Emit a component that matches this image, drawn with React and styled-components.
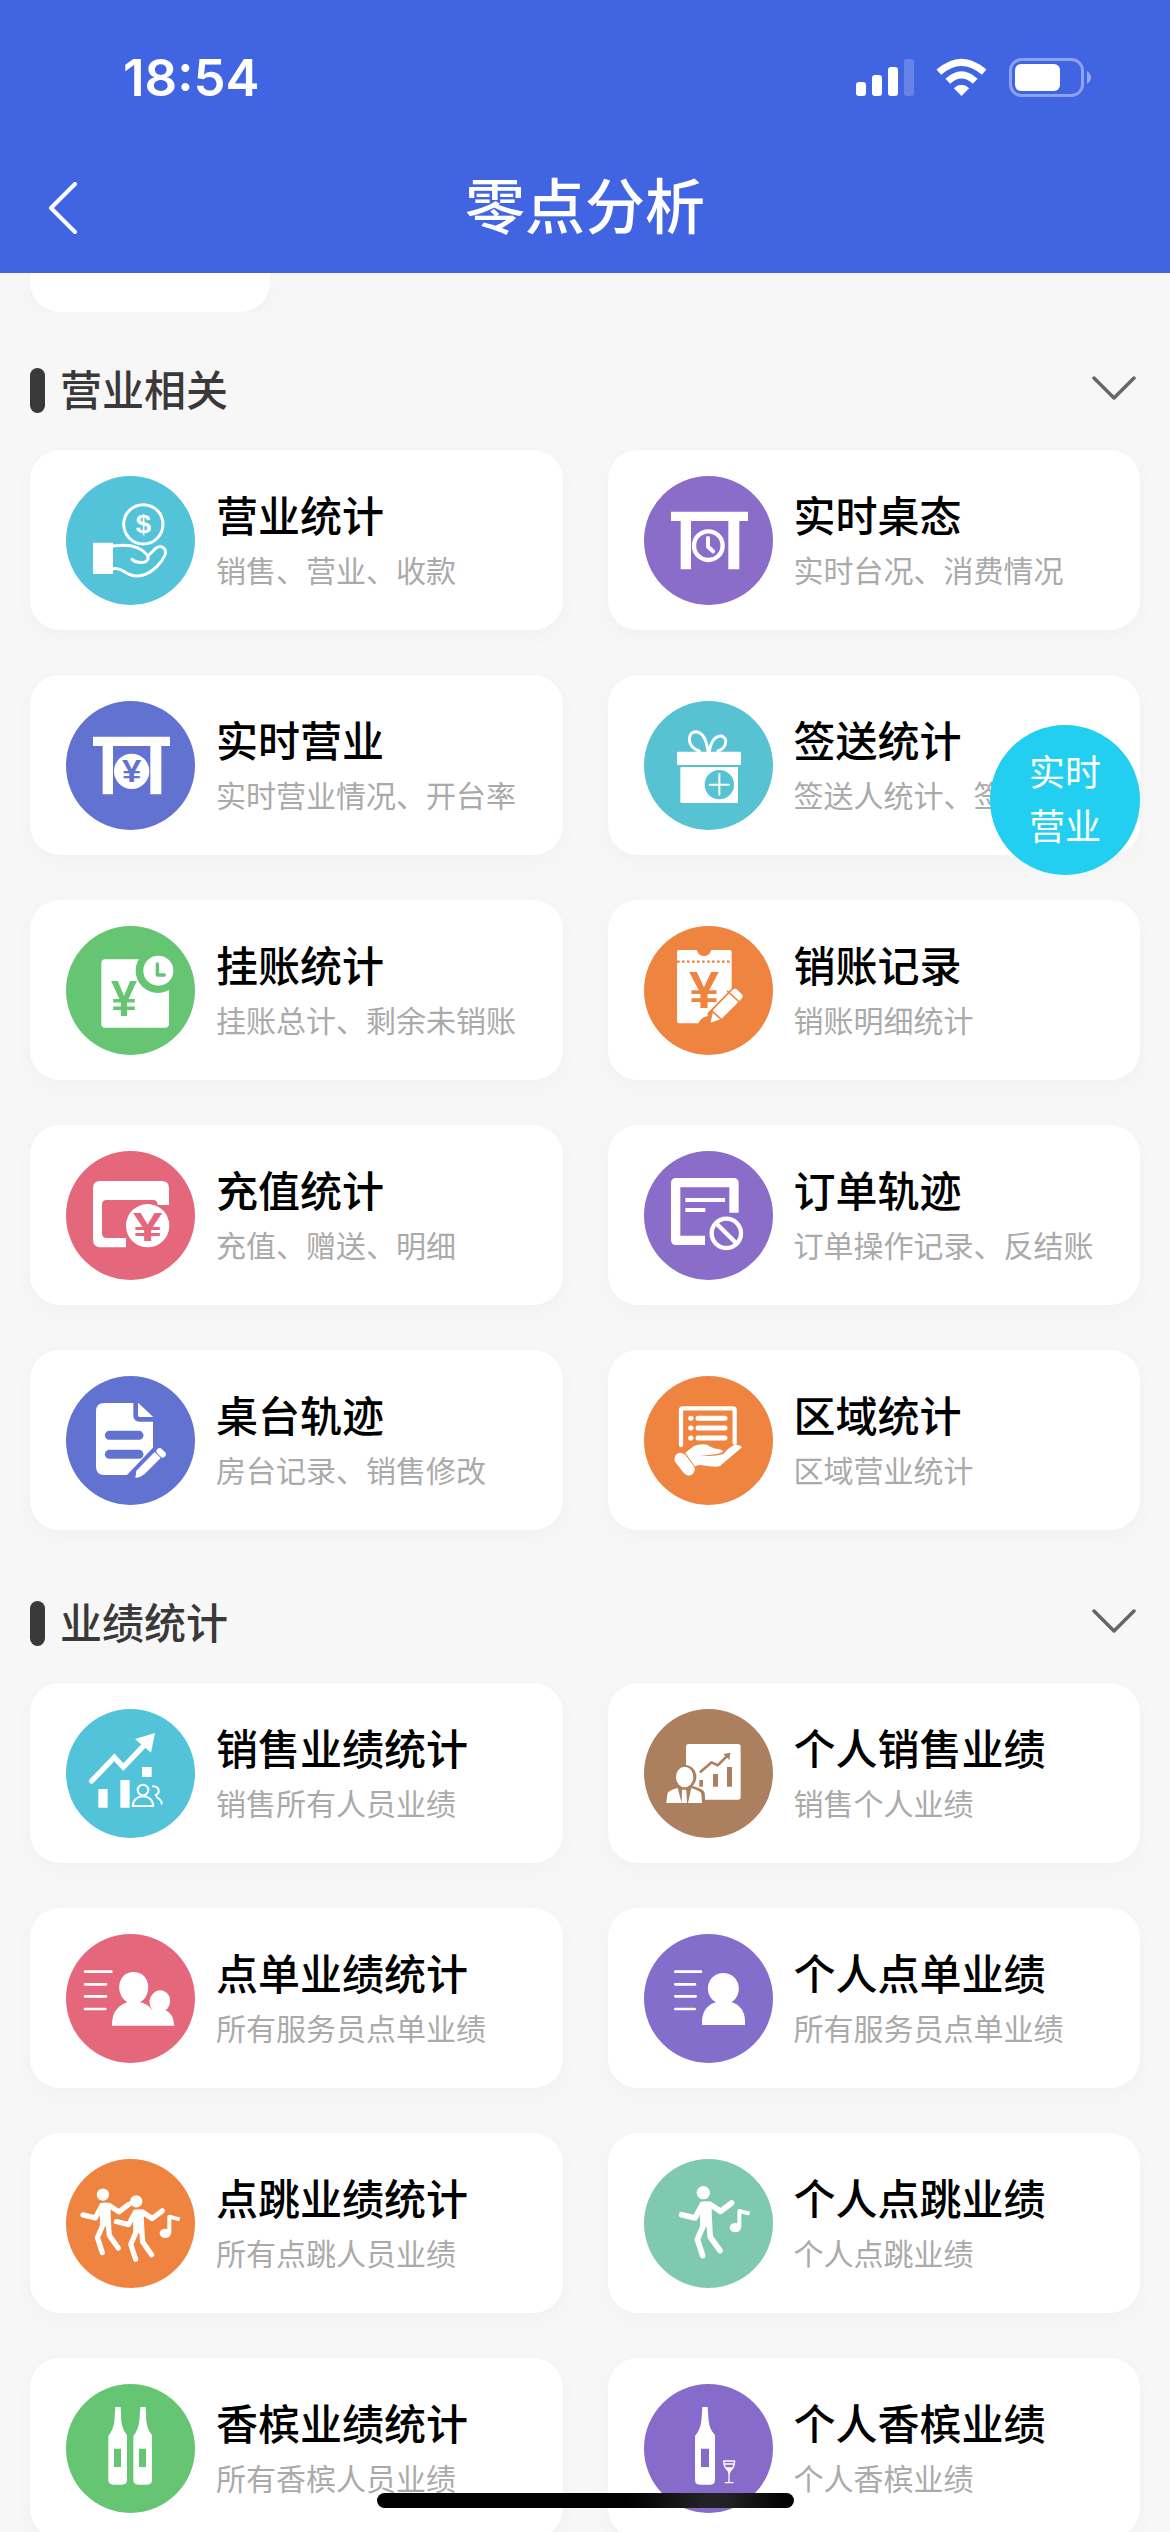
import React from 'react'
import styled, { createGlobalStyle } from 'styled-components'

const GlobalStyle = createGlobalStyle`
  * {
    box-sizing: border-box;
  }
  body {
    margin: 0;
    background-color: #f7f7f7;
    font-family: "Noto Sans CJK SC", sans-serif;
  }
`
const Page = styled.div`
  position: relative;
  display: flex;
  flex-direction: column;
  width: 1170px;
  height: 2532px;
  overflow: hidden;
  background-color: #f7f7f7;
`
const Header = styled.header`
  flex: none;
  height: 273px;
  background-color: #4164e3;
  color: white;
`
const StatusBar = styled.div`
  display: flex;
  align-items: center;
  justify-content: space-between;
  height: 156px;
  padding: 0 78px 0 123px;
`
const Time = styled.span`
  font-family: Inter, sans-serif;
  font-size: 51px;
  font-weight: 600;
  line-height: 60px;
`
const StatusIcons = styled.svg`
  display: block;
  width: 237px;
  height: 40px;
`
const TitleBar = styled.div`
  display: grid;
  grid-template-columns: 120px 1fr 120px;
  align-items: center;
  height: 102px;
`
const BackIcon = styled.svg`
  display: block;
  width: 30px;
  height: 52px;
  margin: 2px 0 0 48px;
`
const PageTitle = styled.h1`
  margin: 0 0 9px;
  text-align: center;
  font-size: 60px;
  font-weight: 500;
  line-height: 80px;
`
const Content = styled.main`
  flex: none;
  padding: 0 30px;
`
const Clip = styled.div`
  height: 39px;
  margin: 0 -30px;
  padding: 0 30px;
  overflow: hidden;
`
const PreviousCard = styled.div`
  width: 240px;
  height: 39px;
  border-radius: 0 0 30px 30px;
  background-color: white;
  box-shadow: 0 6px 18px rgba(40, 90, 80, 0.04);
`
const Section = styled.section`
  padding-top: ${props => props.$top}px;
`
const SectionHead = styled.div`
  display: flex;
  align-items: center;
  height: 45px;
  margin-bottom: 37px;
`
const Marker = styled.span`
  width: 15px;
  height: 45px;
  margin-right: 15px;
  border-radius: 8px;
  background-color: #3a3838;
`
const SectionTitle = styled.h2`
  flex: 1;
  margin: 0 0 6px;
  color: #3a3838;
  font-size: 42px;
  font-weight: 500;
  line-height: 45px;
`
const Chevron = styled.svg`
  width: 44px;
  height: 26px;
  margin: -5px 4px 0 0;
`
const Grid = styled.div`
  display: grid;
  grid-template-columns: 1fr 1fr;
  gap: 45px;
`
const Card = styled.div`
  display: flex;
  height: 180px;
  padding: 26px 0 0 36px;
  border-radius: 30px;
  background-color: white;
  box-shadow: 0 6px 18px rgba(40, 90, 80, 0.04);
`
const Badge = styled.svg`
  flex: none;
  display: block;
  width: 129px;
  height: 129px;
  margin-right: 21px;
  border-radius: 50%;
  background-color: ${props => props.$bg};
  color: ${props => props.$bg};
`
const CardText = styled.div`
  padding-top: 8px;
  white-space: nowrap;
`
const CardTitle = styled.div`
  color: #000;
  font-size: 42px;
  font-weight: 500;
  line-height: 60px;
`
const CardNote = styled.div`
  margin-top: 4px;
  color: #aaa;
  font-size: 30px;
  font-weight: 400;
  line-height: 42px;
`
const FloatButton = styled.div`
  position: absolute;
  top: 725px;
  right: 30px;
  display: flex;
  align-items: center;
  justify-content: center;
  width: 150px;
  height: 150px;
  padding-bottom: 6px;
  border-radius: 50%;
  background-color: #22cff0;
  color: white;
  text-align: center;
  font-size: 36px;
  font-weight: 400;
  line-height: 54px;
`
const HomeIndicator = styled.div`
  position: absolute;
  left: 377px;
  bottom: 24px;
  width: 417px;
  height: 15px;
  border-radius: 8px;
  background: linear-gradient(90deg, #000 0%, #000 60%, #222 78%, #222 84%, #050505 97%);
`

const line = (width, color = 'white') => ({
  fill: 'none',
  stroke: color,
  strokeWidth: width,
  strokeLinecap: 'round',
  strokeLinejoin: 'round',
})

const Sign = ({ x, y, size, width, fill = 'currentColor', weight = 700, children }) => (
  <text
    x={x}
    y={y}
    fill={fill}
    fontFamily="Liberation Sans, sans-serif"
    fontSize={size}
    fontWeight={weight}
    textLength={width}
    lengthAdjust="spacingAndGlyphs"
  >
    {children}
  </text>
)

const Dancer = ({ transform }) => (
  <g transform={transform}>
    <circle cx="178" cy="101" r="20" fill="white" />
    <path d="M168 130Q184 124 202 130L205 205L168 203Z" fill="white" />
    <path d="M113 167L153 177L174 138M198 136L230 157L263 132" {...line(17)} />
    <path d="M178 200L160 241L176 290M196 200L199 234L228 275" {...line(17)} />
  </g>
)

const Note = ({ transform }) => (
  <g transform={transform}>
    <ellipse cx="274" cy="206" rx="17" ry="14" fill="white" />
    <path d="M286 206V156L317 164" {...line(12)} strokeLinecap="butt" />
  </g>
)

const Table = () => (
  <path d="M81 107H312V135H286V280H253V135H141V280H110V135H81Z" fill="white" />
)

const icons = {
  income: (
    <>
      <circle cx="232" cy="145" r="59" {...line(9)} />
      <Sign x="209" y="172" size="78" width="46" fill="white">$</Sign>
      <path d="M81 200H141V294H81Z" fill="white" />
      <path
        d="M141 210C180 204 220 208 242 235C254 253 238 262 220 259Q206 258 198 250M246 240L268 218C284 203 304 217 297 237C286 262 262 286 238 295C212 306 188 296 170 284Q156 275 141 278"
        {...line(9)}
      />
    </>
  ),
  tableClock: (
    <>
      <Table />
      <circle cx="193" cy="209" r="43" {...line(13)} />
      <path d="M192 186V212L207 226" {...line(12)} />
    </>
  ),
  tableYen: (
    <>
      <Table />
      <circle cx="197" cy="211" r="53" fill="white" />
      <Sign x="168" y="244" size="94" width="58">¥</Sign>
    </>
  ),
  gift: (
    <>
      <path
        d="M192 152C188 118 176 94 156 92C134 92 130 122 146 138Q154 147 166 150M196 152C200 122 214 104 232 105C252 110 250 140 222 150"
        {...line(9)}
      />
      <rect x="99" y="152" width="192" height="40" rx="3" fill="white" />
      <rect x="109" y="198" width="173" height="108" rx="4" fill="white" />
      <circle cx="226" cy="251" r="44" fill="currentColor" />
      <path d="M197 251H255M226 219V281" {...line(6)} />
    </>
  ),
  bill: (
    <>
      <rect x="106" y="100" width="203" height="205" rx="12" fill="white" />
      <circle cx="276" cy="134" r="67" fill="currentColor" />
      <circle cx="277" cy="134" r="45" fill="white" />
      <path d="M274 114V147H295" {...line(10, 'currentColor')} />
      <Sign x="135" y="269" size="152" width="78">¥</Sign>
    </>
  ),
  ticket: (
    <>
      <path d="M105 72H158Q164 90 180 90Q196 90 202 72H257Q263 72 263 78V292H105Q99 292 99 286V78Q99 72 105 72Z" fill="white" />
      <path d="M99 107H263" stroke="currentColor" strokeWidth="7" strokeDasharray="8 7" />
      <Sign x="135" y="246" size="158" width="90">¥</Sign>
      <path d="M270 180L190 262L192 270Q170 272 160 298H270Z" fill="currentColor" />
      <path d="M263 194Q271 184 280 191L292 203Q300 211 292 219L233 278L200 290L208 251Z" fill="white" />
      <path d="M251 196L286 228M205 256L234 282" {...line(5, 'currentColor')} />
    </>
  ),
  wallet: (
    <>
      <path
        d="M103 90H287Q309 90 309 112V162H275Q274 147 262 147H122Q108 147 108 161V247Q108 261 122 261H180V289H103Q81 289 81 267V112Q81 90 103 90Z"
        fill="white"
      />
      <circle cx="245" cy="224" r="65" fill="white" />
      <Sign x="201" y="271" size="122" width="88">¥</Sign>
    </>
  ),
  orderVoid: (
    <>
      <path d="M183 268H95V95H270V185" {...line(28)} strokeLinecap="butt" />
      <path d="M124 147H243M124 177H184" {...line(12)} strokeLinecap="butt" />
      <circle cx="247" cy="247" r="44" {...line(13)} />
      <path d="M218 218L276 276" {...line(13)} />
    </>
  ),
  tableEdit: (
    <>
      <path d="M115 81H217L261 122V297H115Q90 297 90 272V106Q90 81 115 81Z" fill="white" />
      <path d="M209 79V118Q209 130 221 130H265" {...line(14, 'currentColor')} strokeLinecap="butt" />
      <path d="M130 178H219M130 235H219" {...line(27, 'currentColor')} />
      <path d="M268 208L180 300H270Z" fill="currentColor" />
      <path d="M211 284L266 228L284 246L236 294Q224 304 208 306Z" fill="white" />
      <path d="M281 226L290 235" {...line(19)} />
    </>
  ),
  areaHand: (
    <>
      <path d="M111 207V103Q111 97 117 97H266Q272 97 272 103V200" {...line(13)} />
      <path d="M140 127H141M140 156H141M140 186H141M162 127H243M162 156H243M162 186H243" {...line(15)} />
      <path
        d="M122 232L150 210Q170 202 192 207Q202 216 222 219Q240 222 236 227Q226 236 168 238Q206 244 238 234Q252 216 270 207Q286 203 294 214L228 270Q218 275 170 267Q162 266 150 273Z"
        fill="white"
      />
      <path d="M110 249L134 280" {...line(37)} />
      <path d="M121 228L157 280" {...line(3, 'currentColor')} />
    </>
  ),
  growth: (
    <>
      <path d="M77 216L145 145L172 174L242 101" {...line(16)} strokeLinejoin="miter" />
      <path d="M267 72L255 131L207 90Z" fill="white" />
      <path d="M97 240H125V296H97ZM163 213H191V296H163ZM228 174H257V204H228Z" fill="white" />
      <circle cx="231" cy="243" r="16" {...line(6)} />
      <path d="M200 291C202 252 260 252 262 291ZM261 232C284 234 281 254 269 258Q272 266 280 270Q287 276 287 284" {...line(6)} />
    </>
  ),
  presenter: (
    <>
      <rect x="126" y="105" width="164" height="167" rx="8" fill="white" />
      <path d="M170 188L203 160L221 169L248 142" {...line(8, 'currentColor')} />
      <path d="M259 131L256 153L238 135Z" fill="currentColor" />
      <path d="M166 213H177V233H166ZM207 195H222V233H207ZM249 174H264V233H249Z" fill="currentColor" />
      <path d="M120 232H148Q180 240 182 252L184 284H120Z" fill="currentColor" />
      <ellipse cx="124" cy="204" rx="33" ry="36" fill="currentColor" />
      <ellipse cx="122" cy="204" rx="26" ry="31" fill="white" />
      <path d="M67 282L70 254Q72 245 101 237L113 282ZM132 282L142 237Q170 246 172 254L174 282ZM114 242H127L129 282H113Z" fill="white" />
    </>
  ),
  staffGroup: (
    <>
      <path d="M57 113H136M57 151H120M57 187H120M57 225H118" {...line(8)} />
      <path
        d="M138 275Q136 222 184 205C145 180 154 114 203 114C252 114 262 180 223 205Q246 210 259 229Q240 200 262 178C284 156 318 178 312 206Q308 224 298 228Q322 238 325 275Z"
        fill="white"
      />
    </>
  ),
  staffOne: (
    <>
      <path d="M94 113H171M94 151H153M94 187H155M94 225H152" {...line(8)} />
      <path
        d="M174 273V262Q176 216 216 205C174 180 190 117 238 117C286 117 302 180 262 205Q302 216 303 262V273Z"
        fill="white"
      />
    </>
  ),
  danceGroup: (
    <>
      <Dancer transform="translate(-53 14) scale(0.92)" />
      <Dancer transform="translate(47 34) scale(0.92)" />
      <Note transform="translate(24 17)" />
    </>
  ),
  danceOne: (
    <>
      <Dancer />
      <Note />
    </>
  ),
  bottles: (
    <>
      {[0, 75].map(x => (
        <g key={x} transform={`translate(${x} 0)`}>
          <path
            d="M148 69H164L166 112Q170 140 183 153V288Q183 302 168 302H142Q127 302 127 288V156Q142 138 145 112Z"
            fill="white"
          />
          <path d="M144 194H165V249H144Z" fill="currentColor" />
        </g>
      ))}
    </>
  ),
  bottleGlass: (
    <>
      <path
        d="M175 69H191L194 112Q198 140 213 153V288Q213 302 199 302H167Q153 302 153 288V156Q169 138 172 112Z"
        fill="white"
      />
      <path d="M171 194H195V249H171Z" fill="currentColor" />
      <path d="M239 231H272Q271 254 256 262Q240 254 239 231ZM240 240H271M255 262V294M244 296H267" {...line(4)} />
      <path d="M245 250H266L256 272Z" fill="white" />
    </>
  ),
}

const sections = [
  {
    title: '营业相关',
    top: 56,
    cards: [
      ['income', '#52c3d8', '营业统计', '销售、营业、收款'],
      ['tableClock', '#8a6dc8', '实时桌态', '实时台况、消费情况'],
      ['tableYen', '#6272d1', '实时营业', '实时营业情况、开台率'],
      ['gift', '#57c2d2', '签送统计', '签送人统计、签送明细'],
      ['bill', '#65c573', '挂账统计', '挂账总计、剩余未销账'],
      ['ticket', '#ee8440', '销账记录', '销账明细统计'],
      ['wallet', '#e4677b', '充值统计', '充值、赠送、明细'],
      ['orderVoid', '#8a6dc8', '订单轨迹', '订单操作记录、反结账'],
      ['tableEdit', '#6272d1', '桌台轨迹', '房台记录、销售修改'],
      ['areaHand', '#ee8440', '区域统计', '区域营业统计'],
    ],
  },
  {
    title: '业绩统计',
    top: 71,
    cards: [
      ['growth', '#52c3d8', '销售业绩统计', '销售所有人员业绩'],
      ['presenter', '#ac7f5e', '个人销售业绩', '销售个人业绩'],
      ['staffGroup', '#e4677b', '点单业绩统计', '所有服务员点单业绩'],
      ['staffOne', '#846ecb', '个人点单业绩', '所有服务员点单业绩'],
      ['danceGroup', '#ee8440', '点跳业绩统计', '所有点跳人员业绩'],
      ['danceOne', '#80c9b1', '个人点跳业绩', '个人点跳业绩'],
      ['bottles', '#65c573', '香槟业绩统计', '所有香槟人员业绩'],
      ['bottleGlass', '#876bcb', '个人香槟业绩', '个人香槟业绩'],
    ],
  },
]

export default () => (
  <Page>
    <GlobalStyle />
    <Header>
      <StatusBar>
        <Time>18:54</Time>
        <StatusIcons viewBox="0 0 237 40">
          <g fill="white">
            <rect x="1" y="24" width="10" height="14" rx="3" />
            <rect x="17" y="17" width="10" height="21" rx="3" />
            <rect x="33" y="9" width="10" height="29" rx="3" />
            <rect x="49" y="1" width="10" height="37" rx="3" opacity="0.2" />
            <path d="M106.500 38L98.800 30.200Q106.500 23.500 114.200 30.200Z" />
            <rect x="160" y="6" width="45" height="27" rx="6" />
            <path d="M232 13Q236 16 236 19.500Q236 23 232 26Z" opacity="0.45" />
          </g>
          <path d="M83.800 14.200Q106.500 -5.500 129.200 14.200M92.800 23.300Q106.500 10.500 120.200 23.300" fill="none" stroke="white" strokeWidth="7" />
          <rect x="155.500" y="1.500" width="72" height="36" rx="11" fill="none" stroke="white" strokeWidth="3" opacity="0.4" />
        </StatusIcons>
      </StatusBar>
      <TitleBar>
        <BackIcon viewBox="0 0 30 52">
          <path d="M27 2L3 26L27 50" {...line(4)} />
        </BackIcon>
        <PageTitle>零点分析</PageTitle>
      </TitleBar>
    </Header>
    <Content>
      <Clip>
        <PreviousCard />
      </Clip>
      {sections.map(section => (
        <Section key={section.title} $top={section.top}>
          <SectionHead>
            <Marker />
            <SectionTitle>{section.title}</SectionTitle>
            <Chevron viewBox="0 0 44 26">
              <path d="M2 3L22 23L42 3" {...line(3.5, '#666')} />
            </Chevron>
          </SectionHead>
          <Grid>
            {section.cards.map(([icon, color, title, note]) => (
              <Card key={title}>
                <Badge $bg={color} viewBox="0 0 387 387">{icons[icon]}</Badge>
                <CardText>
                  <CardTitle>{title}</CardTitle>
                  <CardNote>{note}</CardNote>
                </CardText>
              </Card>
            ))}
          </Grid>
        </Section>
      ))}
    </Content>
    <FloatButton>
      实时
      <br />
      营业
    </FloatButton>
    <HomeIndicator />
  </Page>
)
